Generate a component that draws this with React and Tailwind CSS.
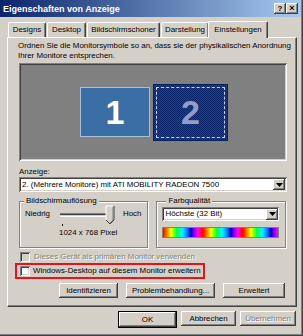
import React from "react";

const raised =
  "bg-[#d4d0c8] shadow-[inset_-1px_-1px_#404040,inset_1px_1px_#ffffff,inset_-2px_-2px_#808080,inset_2px_2px_#d4d0c8]";
const sunken =
  "shadow-[inset_1px_1px_#808080,inset_-1px_-1px_#ffffff,inset_2px_2px_#404040,inset_-2px_-2px_#d4d0c8]";

function DropBtn() {
  return (
    <div className={`${raised} w-[12px] h-[11px] flex items-center justify-center`}>
      <svg width="7" height="4" viewBox="0 0 7 4">
        <polygon points="0,0 7,0 3.5,4" fill="#000" />
      </svg>
    </div>
  );
}

function Btn({ children, w, disabled, def }) {
  return (
    <div
      className={`${def ? "border border-black" : ""} flex`}
      style={{ width: w }}
    >
      <div
        className={`${raised} flex-1 h-[15px] flex items-center justify-center whitespace-nowrap ${
          disabled ? "text-[#808080] [text-shadow:1px_1px_#ffffff]" : ""
        }`}
      >
        {children}
      </div>
    </div>
  );
}

function Check({ disabled }) {
  return (
    <div
      className={`w-[10px] h-[10px] shrink-0 ${disabled ? "bg-[#d4d0c8]" : "bg-white"} shadow-[inset_1px_1px_#808080,inset_-1px_-1px_#ffffff,inset_2px_2px_#404040,inset_-2px_-2px_#d4d0c8]`}
    />
  );
}

export default function App() {
  const tabs = [
    { t: "Designs", w: 38 },
    { t: "Desktop", w: 39 },
    { t: "Bildschirmschoner", w: 73 },
    { t: "Darstellung", w: 48 },
  ];
  return (
    <div className="w-[303px] h-[336px] bg-[#d4d0c8] font-['Liberation_Sans',Arial,sans-serif] text-[7.9px] leading-[10px] text-black overflow-hidden shadow-[inset_-1px_-1px_#404040,inset_-2px_-2px_#808080]">
      {/* Title bar */}
      <div className="h-[17px] mr-[2px] bg-[linear-gradient(to_right,#0a246a,#a6caf0)] flex items-center pl-[3px] pr-[3px]">
        <span className="text-white font-bold text-[9px] whitespace-nowrap">
          Eigenschaften von Anzeige
        </span>
        <div className="ml-auto flex">
          <div className={`${raised} w-[12px] h-[11px] flex items-center justify-center font-bold text-[8px] leading-none`}>
            ?
          </div>
          <div className={`${raised} w-[12px] h-[11px] flex items-center justify-center font-bold text-[9px] leading-none`}>
            ×
          </div>
        </div>
      </div>

      {/* Tabs */}
      <div className="flex items-end h-[20px] pl-[8px]">
        {tabs.map((x) => (
          <div
            key={x.t}
            style={{ width: x.w }}
            className="h-[15px] mr-[1px] flex items-center justify-center whitespace-nowrap border-t border-l border-white border-r border-r-[#404040] rounded-t-[2px] shadow-[inset_-1px_0_#808080]"
          >
            {x.t}
          </div>
        ))}
        <div className="w-[60px] h-[17px] -ml-[2px] -mb-px relative z-10 bg-[#d4d0c8] flex items-start pt-[3px] justify-center whitespace-nowrap border-t border-l border-white border-r border-r-[#404040] rounded-t-[2px] shadow-[inset_-1px_0_#808080]">
          Einstellungen
        </div>
      </div>

      {/* Panel */}
      <div className="ml-[7px] w-[290px] h-[270px] border-t border-l border-white border-r border-b border-r-[#404040] border-b-[#404040] shadow-[inset_-1px_-1px_#808080] pl-[10px] pr-[10px] pt-[3px] flex flex-col">
        <p className="whitespace-nowrap">
          Ordnen Sie die Monitorsymbole so an, dass sie der physikalischen Anordnung
          <br />
          Ihrer Monitore entsprechen.
        </p>

        {/* Preview */}
        <div className={`mt-[2px] ml-px w-[268px] h-[98px] bg-[#808080] ${sunken} flex items-center justify-center gap-[3px] pl-[2px]`}>
          <div className="w-[70px] h-[50px] bg-[#3a6ea5] border border-[#a8c0dc] flex items-center justify-center">
            <span className="text-white font-bold text-[34px] leading-none">1</span>
          </div>
          <div className="w-[75px] h-[57px] bg-[repeating-conic-gradient(#0a246a_0_25%,#1f3f8c_0_50%)] bg-[length:2px_2px] border border-[#08205a] p-[2px]">
            <div className="w-full h-full border border-dashed border-[#c8d0e8] flex items-center justify-center">
              <span className="text-[#8e9fcc] font-bold text-[34px] leading-none">2</span>
            </div>
          </div>
        </div>

        {/* Anzeige */}
        <div className="mt-[6px] ml-px">Anzeige:</div>
        <div className={`ml-px w-[268px] h-[15px] bg-white ${sunken} flex items-center pl-[3px] pr-[2px]`}>
          <span className="whitespace-nowrap">
            2. (Mehrere Monitore) mit ATI MOBILITY RADEON 7500
          </span>
          <div className="ml-auto">
            <DropBtn />
          </div>
        </div>

        {/* Groups */}
        <div className="mt-[4px] ml-px flex gap-[8px]">
          <fieldset className="w-[130px] h-[52px] border border-[#808080] shadow-[1px_1px_#ffffff,inset_1px_1px_#ffffff]">
            <legend className="ml-[4px] px-[2px] bg-[#d4d0c8] relative">
              Bildschirmauflösung
            </legend>
            <div className="flex items-start pl-[5px] -mt-[1px]">
              <span className="w-[33px] pt-[4px]">Niedrig</span>
              <svg width="62" height="22" viewBox="0 0 62 22" className="shrink-0">
                <rect x="2" y="8" width="52" height="1" fill="#808080" />
                <rect x="2" y="9" width="52" height="1" fill="#404040" />
                <rect x="2" y="10" width="52" height="1" fill="#d4d0c8" />
                <rect x="2" y="11" width="52" height="1" fill="#ffffff" />
                <rect x="4" y="19" width="1" height="2" fill="#000" />
                <polygon points="48,1 56,1 56,15 52,19 48,15" fill="#d4d0c8" />
                <polyline points="48,15 48,1 55,1" fill="none" stroke="#ffffff" strokeWidth="1" />
                <polyline points="56,1 56,15 52,19 48,15" fill="none" stroke="#404040" strokeWidth="1" />
                <polyline points="55,2 55,15 52,18" fill="none" stroke="#808080" strokeWidth="1" />
              </svg>
              <span className="pt-[4px] ml-[3px]">Hoch</span>
            </div>
            <div className="pl-[39px] mt-[1px] whitespace-nowrap">1024 x 768 Pixel</div>
          </fieldset>

          <fieldset className="w-[130px] h-[52px] border border-[#808080] shadow-[1px_1px_#ffffff,inset_1px_1px_#ffffff] pl-[5px]">
            <legend className="ml-[4px] px-[2px] bg-[#d4d0c8] relative">Farbqualität</legend>
            <div className={`mt-[1px] w-[117px] h-[14px] bg-white ${sunken} flex items-center pl-[3px] pr-[1px]`}>
              <span className="whitespace-nowrap">Höchste (32 Bit)</span>
              <div className="ml-auto">
                <DropBtn />
              </div>
            </div>
            <div className="mt-[6px] w-[117px] h-[11px] bg-[#808080] p-px">
              <div className="w-full h-full bg-[repeating-linear-gradient(to_right,#ff0000_0px,#ff8000_4px,#ffff00_8px,#80ff00_11px,#00ff40_14px,#00ffff_19px,#0080ff_24px,#0000c0_28px,#8000ff_31px,#ff00ff_35px,#ff0040_38px,#ff0000_40px)]" />
            </div>
          </fieldset>
        </div>

        {/* Checkboxes */}
        <div className="mt-[3px] ml-[2px] flex items-center gap-[4px] h-[11px] text-[#808080] [text-shadow:1px_1px_#ffffff]">
          <Check disabled />
          <span className="whitespace-nowrap">Dieses Gerät als primären Monitor verwenden</span>
        </div>
        <div className="mt-[1px] -ml-[3px] w-[190px] h-[16px] border-2 border-[#e8121a] flex items-center pl-[3px] gap-[3px]">
          <Check />
          <span className="whitespace-nowrap">Windows-Desktop auf diesem Monitor erweitern</span>
        </div>

        {/* Buttons row */}
        <div className="mt-[4px] flex justify-end gap-[8px] pr-[1px]">
          <Btn w={59}>Identifizieren</Btn>
          <Btn w={89}>Problembehandlung...</Btn>
          <Btn w={62}>Erweitert</Btn>
        </div>
      </div>

      {/* Bottom buttons */}
      <div className="mt-[4px] flex justify-end pr-[7px] gap-[4px]">
        <Btn w={59} def>
          OK
        </Btn>
        <Btn w={55}>Abbrechen</Btn>
        <Btn w={56} disabled>
          Übernehmen
        </Btn>
      </div>
    </div>
  );
}
